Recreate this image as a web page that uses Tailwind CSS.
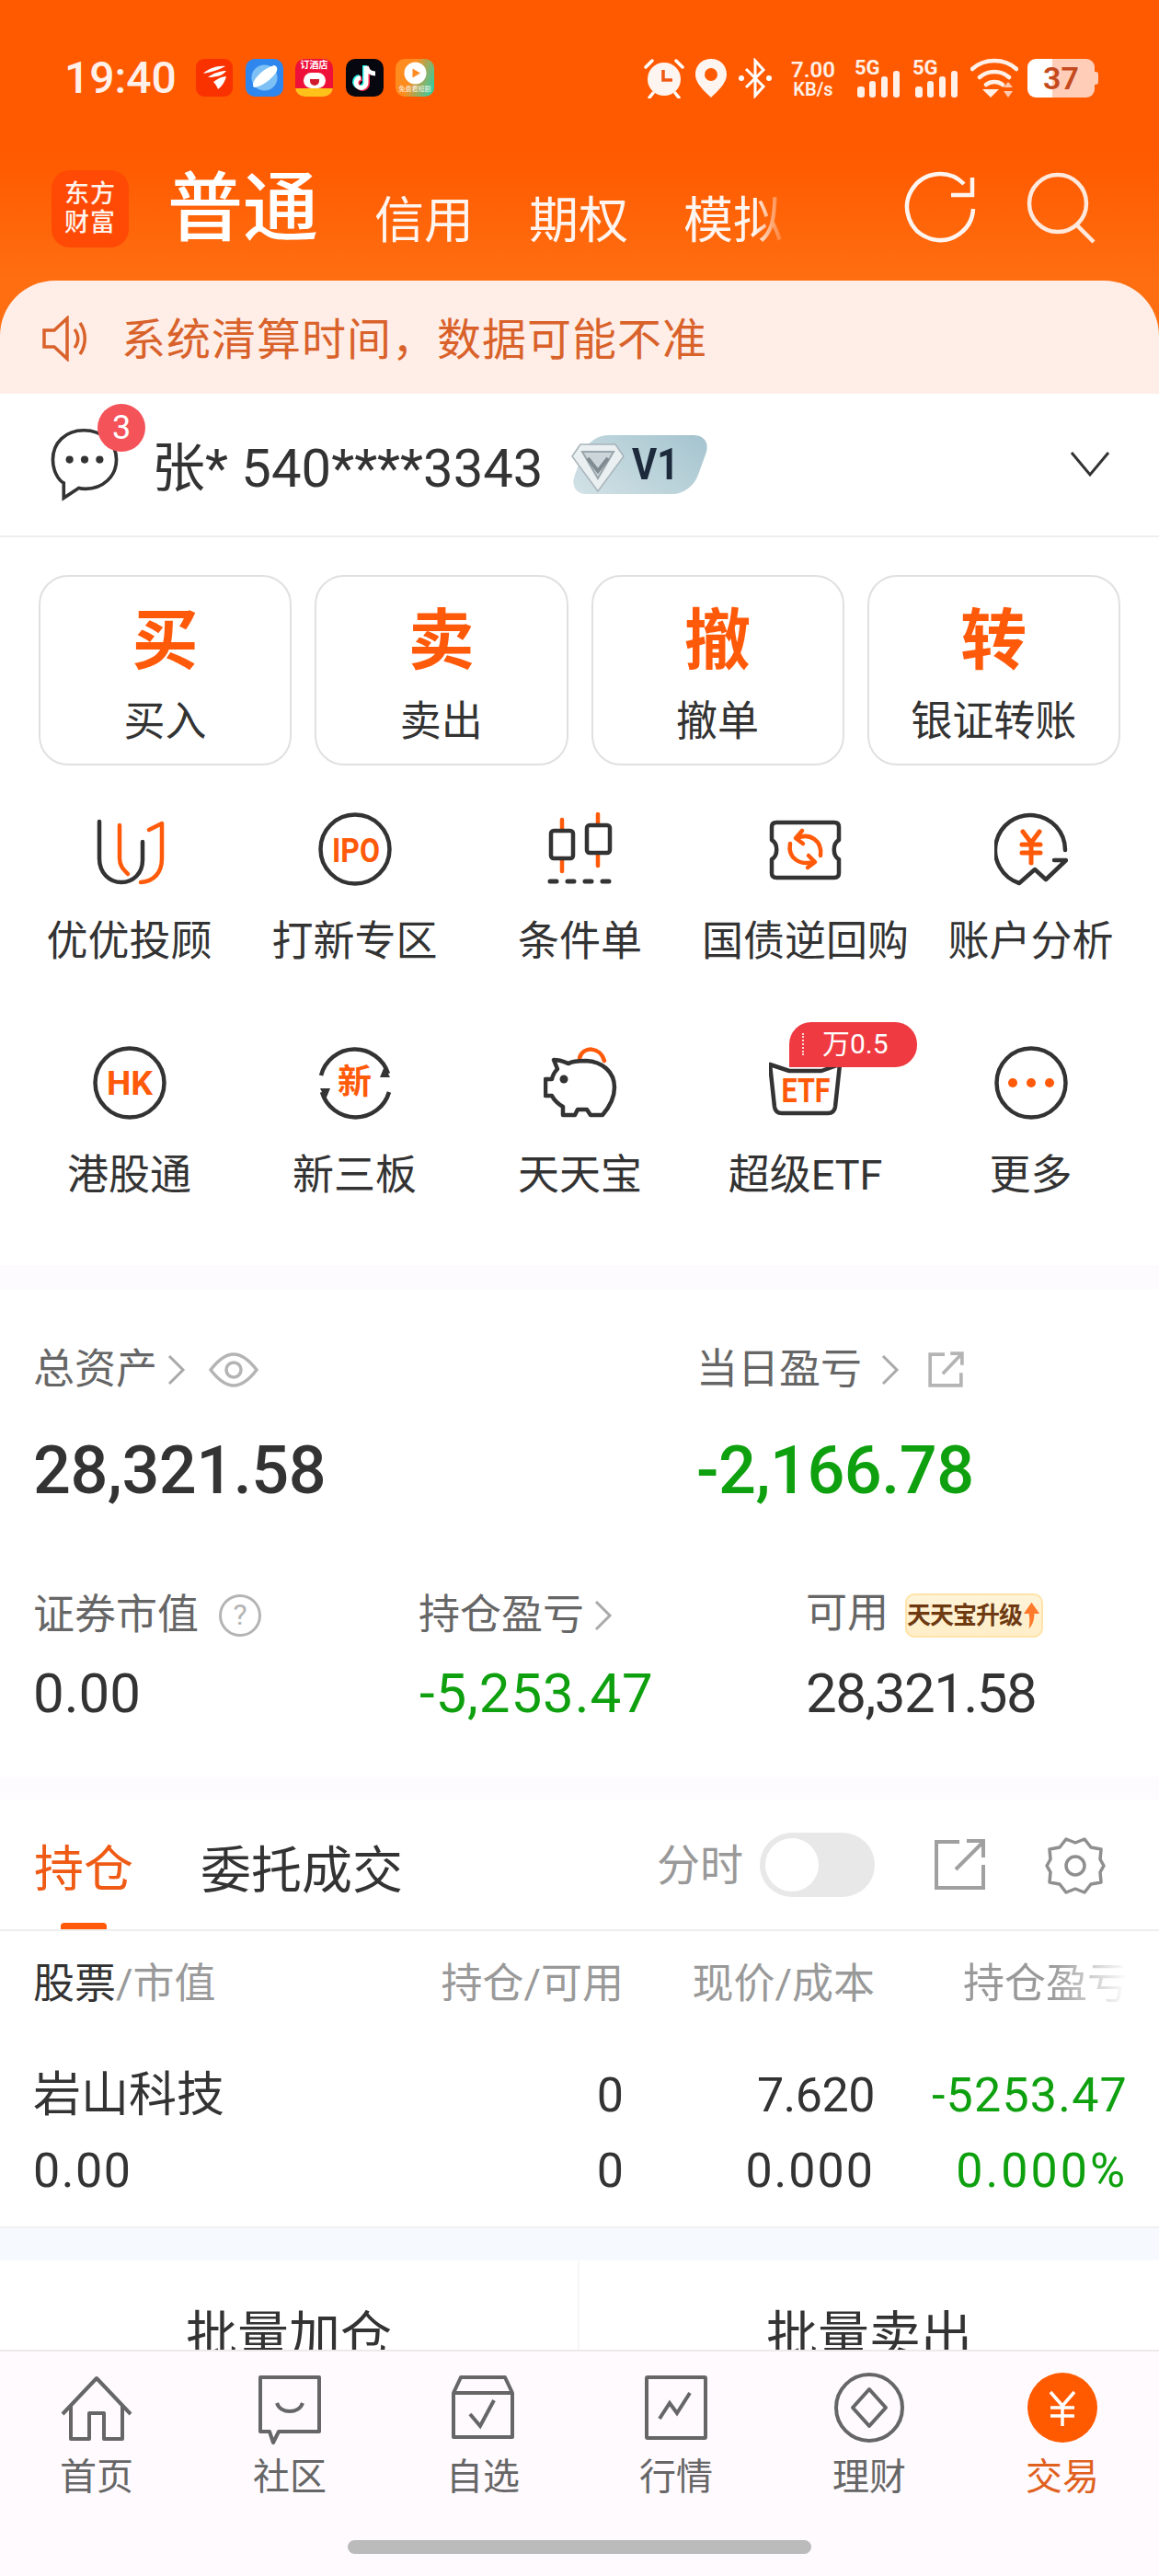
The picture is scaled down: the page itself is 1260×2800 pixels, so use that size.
<!DOCTYPE html>
<html lang="zh"><head><meta charset="utf-8"><script src="https://cdn.jsdelivr.net/npm/@tailwindcss/browser@4"></script></head>
<body class="bg-white">
<div class="w-[1260px] h-[2800px] flex flex-col overflow-hidden bg-white text-[#333] [font-family:Roboto,'Noto_Sans_CJK_SC',sans-serif]">
<div class="flex-none h-[2554px] overflow-hidden">
  <!-- header -->
  <div class="h-[428px] flex flex-col bg-[linear-gradient(180deg,#ff5a00_0px,#ff5a00_170px,#ff6f12_310px)]">
    <div class="h-[64px]"></div>
    <div class="h-[42px] flex items-center text-white pl-[70px]">
      <span class="w-[143px] text-[48px] leading-[42px] font-medium text-[#fff0ea]">19:40</span>
      <svg class="w-[40px] h-[41px]" viewBox="0 0 40 41"><rect width="40" height="41" rx="9" fill="#fa3200"/><path d="M8 16C14 10 24 7 32 8C27 11 22 13 8 16ZM13 20C20 15 27 13 33 13C29 18 23 20 13 20ZM19 25C24 21 29 19 33 19C31 26 28 30 24 33C23 30 21 27 19 25Z" fill="#fff"/></svg>
      <svg class="w-[41px] h-[41px] ml-[14px]" viewBox="0 0 41 41"><rect width="41" height="41" rx="10" fill="#2f86ec"/><circle cx="20.500" cy="20.500" r="14" fill="#7cc0f5"/><path d="M8 27C10 20 20 10 31 7C35 8 35 12 33 15C28 22 18 30 10 31C8 31 8 29 8 27Z" fill="#fff"/></svg>
      <div class="w-[41px] h-[41px] ml-[13px] rounded-[10px] bg-[#ee1038] relative overflow-hidden flex flex-col items-center">
        <span class="text-[10px] leading-[14px] text-white font-bold whitespace-nowrap">订酒店</span>
        <div class="w-[24px] h-[17px] rounded-full bg-white mt-[1px] flex justify-center"><div class="w-[10px] h-[7px] mt-[7px] rounded-b-full bg-[#d11b2c]"></div></div>
        <div class="w-full h-[9px] bg-[#ffc21a] mt-[0px]"></div>
      </div>
      <svg class="w-[41px] h-[41px] ml-[14px]" viewBox="0 0 41 41"><rect width="41" height="41" rx="10" fill="#07070f"/><path d="M22 8V26A5.500 5.500 0 1 1 16 20.500" fill="none" stroke="#25f4ee" stroke-width="5" transform="translate(-1.500 -1)"/><path d="M22 8V26A5.500 5.500 0 1 1 16 20.500" fill="none" stroke="#fe2c55" stroke-width="5" transform="translate(1.500 1)"/><path d="M22 8V26A5.500 5.500 0 1 1 16 20.500" fill="none" stroke="#fff" stroke-width="5"/><path d="M22 8C23 13 27 16 32 16" fill="none" stroke="#fff" stroke-width="5"/></svg>
      <div class="w-[42px] h-[41px] ml-[13px] rounded-[10px] bg-[linear-gradient(110deg,#ff8c1e_40%,#18d6b4)] flex flex-col items-center relative overflow-hidden">
        <svg class="w-[25px] h-[25px] mt-[3px]" viewBox="0 0 25 25"><circle cx="12.500" cy="12.500" r="12" fill="#fff"/><path d="M9.500 7.500L18 12.500L9.500 17.500Z" fill="#ff8a20"/></svg>
        <span class="text-[7px] leading-[9px] text-white/90 whitespace-nowrap mt-[1px]">免费看短剧</span>
      </div>
      <div class="flex-1"></div>
      <svg class="w-[44px] h-[44px]" viewBox="0 0 44 44"><path d="M2 10L9 3M42 10L35 3M10 38L6 43M34 38L38 43" stroke="#fff" stroke-width="3.500" stroke-linecap="round"/><circle cx="22" cy="23" r="18" fill="#fff5f0"/><path d="M21 13V24H31" fill="none" stroke="#ef5a14" stroke-width="3.500"/></svg>
      <svg class="w-[36px] h-[44px] ml-[11px]" viewBox="0 0 36 44"><path fill-rule="evenodd" d="M18 1C8 1 1 8 1 18C1 28 12 37 18 43C24 37 35 28 35 18C35 8 28 1 18 1ZM18 11A7 7 0 1 1 18 25A7 7 0 1 1 18 11Z" fill="#fff5f0"/></svg>
      <svg class="w-[36px] h-[44px] ml-[12px]" viewBox="0 0 36 44"><path d="M8 12L27 31L18 41V3L27 13L8 32" fill="none" stroke="#fff" stroke-width="3"/><circle cx="3" cy="22" r="3" fill="#fff"/><circle cx="33" cy="22" r="3" fill="#fff"/></svg>
      <div class="w-[52px] ml-[19px] flex flex-col items-center font-semibold text-[#fff0e8] leading-none">
        <span class="text-[24px] leading-[24px]">7.00</span><span class="text-[20px] leading-[18px]">KB/s</span>
      </div>
      <svg class="w-[50px] h-[44px] ml-[19px] overflow-visible" viewBox="0 0 50 44"><text x="0" y="18" font-size="22" font-weight="700" fill="#fff0e8" font-family="Roboto">5G</text><rect x="3" y="31" width="8" height="12" rx="3" fill="#fff0e8"/><rect x="16" y="25" width="7" height="18" rx="3" fill="#fff0e8"/><rect x="29" y="20" width="7" height="23" rx="3" fill="#fff0e8"/><rect x="42" y="14" width="7" height="29" rx="3" fill="#fff0e8"/></svg>
      <svg class="w-[50px] h-[44px] ml-[13px] overflow-visible" viewBox="0 0 50 44"><text x="0" y="18" font-size="22" font-weight="700" fill="#fff0e8" font-family="Roboto">5G</text><rect x="3" y="31" width="8" height="12" rx="3" fill="#fff0e8"/><rect x="16" y="25" width="7" height="18" rx="3" fill="#fff0e8"/><rect x="29" y="20" width="7" height="23" rx="3" fill="#fff0e8"/><rect x="42" y="14" width="7" height="29" rx="3" fill="#fff0e8"/></svg>
      <svg class="w-[52px] h-[44px] ml-[13px]" viewBox="0 0 52 44"><path d="M2 12C15 0 37 0 50 12M10 21C19 13 33 13 42 21M17 29C22 25 30 25 35 29" fill="none" stroke="#fff0e8" stroke-width="4.500" stroke-linecap="round"/><path d="M16 34H34L25 43Z" fill="#fff0e8" transform="translate(-3 0)"/><path d="M41 26L46 32H36ZM41 43L46 36H36Z" fill="#ffcab0"/></svg>
      <div class="w-[73px] h-[42px] ml-[10px] rounded-[9px] bg-[linear-gradient(90deg,#fff_0,#fff_37%,#ffcdb8_37%,#ffcdb8_100%)] flex items-center justify-center text-[34px] leading-none font-semibold text-[#c4491c]">37</div>
      <div class="w-[4px] h-[14px] bg-[#ffcdb8] rounded-r-[3px] mr-[66px]"></div>
    </div>
    <div class="h-[79px]"></div>
    <div class="h-[84px] flex items-center text-white pl-[56px] relative">
      <div class="w-[84px] h-[84px] rounded-[20px] bg-[#ff4a05] flex flex-col items-center justify-center text-[27px] leading-[31px] font-medium tracking-[1px] text-[#fff3ec]"><span>东方</span><span>财富</span></div>
      <span class="ml-[42px] text-[82px] leading-[84px] font-medium">普通</span>
      <span class="ml-[61px] mt-[28px] text-[54px] leading-[60px] text-[#fff5f0]">信用</span>
      <span class="ml-[60px] mt-[28px] text-[54px] leading-[60px] text-[#fff5f0]">期权</span>
      <span class="ml-[60px] mt-[28px] text-[54px] leading-[60px] text-[#fff5f0] [mask-image:linear-gradient(to_right,black_72%,transparent_105%)]">模拟</span>
      <svg class="w-[80px] h-[80px] ml-[132px] -mt-[3px]" viewBox="0 0 80 80"><path d="M75 42A36 36 0 1 1 65 15" fill="none" stroke="#fff5f0" stroke-width="4.500"/><path d="M74 8V27H51" fill="none" stroke="#fff5f0" stroke-width="4.500"/></svg>
      <svg class="w-[80px] h-[80px] ml-[50px] -mt-[3px]" viewBox="0 0 80 80"><circle cx="37" cy="36" r="31" fill="none" stroke="#ffe8dc" stroke-width="4.500"/><path d="M58 60L76 78" stroke="#ffe8dc" stroke-width="4.500"/></svg>
    </div>
    <div class="h-[37px]"></div>
    <div class="h-[123px] flex items-center rounded-t-[60px] bg-[#ffeee8] pl-[46px] text-[#d9622b]">
      <svg class="w-[48px] h-[50px] mt-[2px]" viewBox="0 0 48 50"><path d="M2 16H13L27 3V47L13 34H2Z" fill="none" stroke="#d9622b" stroke-width="3.500"/><path d="M35 15C40 21 40 29 35 35M41 8C48 18 48 32 41 42" fill="none" stroke="#d9622b" stroke-width="3.500"/></svg>
      <span class="ml-[38px] mt-[6px] text-[48px] leading-[60px] tracking-[1px]">系统清算时间，数据可能不准</span>
    </div>
  </div>
  <!-- account -->
  <div class="h-[156px] border-b-2 border-[#eeeeee] flex items-center pl-[53px] pr-[53px]">
    <div class="w-[112px] h-[120px] relative">
      <svg class="absolute left-0 top-[20px] w-[78px] h-[80px]" viewBox="0 0 80 88"><path d="M39 3C17 3 2 18 2 38C2 52 9 63 15 66V84L33 72C36 73 38 73 41 73C62 73 78 58 78 38C78 18 61 3 39 3Z" fill="none" stroke="#333" stroke-width="4"/><circle cx="22" cy="38" r="4.500" fill="#333"/><circle cx="40" cy="38" r="4.500" fill="#333"/><circle cx="58" cy="38" r="4.500" fill="#333"/></svg>
      <div class="absolute left-[53px] -top-[6px] w-[52px] h-[52px] rounded-full bg-[#f4535a] text-white text-[36px] leading-[52px] text-center">3</div>
    </div>
    <span class="text-[58px] leading-[70px] mt-[7px]">张* 540****3343</span>
    <div class="ml-[39px] w-[134px] h-[64px] relative">
      <div class="absolute inset-0 skew-x-[-20deg] rounded-[20px] bg-[linear-gradient(30deg,#d4e3e7,#a3c3ce)]"></div>
      <svg class="absolute -left-[8px] top-[9px] w-[58px] h-[53px]" viewBox="0 0 58 53"><path d="M10 1H48L57 14L29 52L1 14Z" fill="#eaeff1" stroke="#a8b4ba" stroke-width="1.500" stroke-linejoin="round"/><path d="M12 9H46L29 38Z" fill="#ccd5d9" stroke="#9aa6ac" stroke-width="2"/><path d="M18 16L29 30L40 16" fill="none" stroke="#7f8b91" stroke-width="4"/></svg>
      <span class="absolute left-[58px] top-[5px] text-[49px] leading-[54px] font-bold text-[#1d2a3c] origin-left scale-x-[0.85]">V1</span>
    </div>
    <div class="flex-1"></div>
    <svg class="w-[44px] h-[30px] -mt-[2px]" viewBox="0 0 44 30"><path d="M2 3L22 27L42 3" fill="none" stroke="#333" stroke-width="3"/></svg>
  </div>
  <!-- actions -->
  <div class="grid grid-cols-4 gap-[25px] px-[42px] pt-[41px]">
    <div class="h-[207px] rounded-[32px] border-2 border-[#e0e0e0] flex flex-col items-center"><span class="mt-[28px] text-[72px] leading-[84px] font-bold text-[#ff5a0a]">买</span><span class="mt-[16px] text-[45px] leading-[60px]">买入</span></div>
    <div class="h-[207px] rounded-[32px] border-2 border-[#e0e0e0] flex flex-col items-center"><span class="mt-[28px] text-[72px] leading-[84px] font-bold text-[#ff5a0a]">卖</span><span class="mt-[16px] text-[45px] leading-[60px]">卖出</span></div>
    <div class="h-[207px] rounded-[32px] border-2 border-[#e0e0e0] flex flex-col items-center"><span class="mt-[28px] text-[72px] leading-[84px] font-bold text-[#ff5a0a]">撤</span><span class="mt-[16px] text-[45px] leading-[60px]">撤单</span></div>
    <div class="h-[207px] rounded-[32px] border-2 border-[#e0e0e0] flex flex-col items-center"><span class="mt-[28px] text-[72px] leading-[84px] font-bold text-[#ff5a0a]">转</span><span class="mt-[16px] text-[45px] leading-[60px]">银证转账</span></div>
  </div>
  <!-- grid -->
  <div class="grid grid-cols-5 pl-[18px] pr-[17px] pt-[51px] h-[543px] text-[45px] leading-[60px]">
    <div class="h-[254px] flex flex-col items-center">
      <svg class="w-[80px] h-[80px]" viewBox="0 0 80 80" fill="none" stroke-width="4.500" stroke-linecap="round" stroke-linejoin="round"><path d="M7 10V50C7 66 18 76 31 76C44 76 54 66 54 52V32" stroke="#333"/><path d="M29 14V50C29 58 33 62 38 67" stroke="#ff5a0a"/><path d="M61 19L75 12V50C75 66 66 75 52 76" stroke="#ff5a0a"/></svg>
      <span class="mt-[31px] whitespace-nowrap">优优投顾</span>
    </div>
    <div class="h-[254px] flex flex-col items-center">
      <svg class="w-[80px] h-[80px]" viewBox="0 0 80 80"><circle cx="40" cy="40" r="37.500" fill="none" stroke="#333" stroke-width="4.500"/><text x="41" y="54" text-anchor="middle" font-size="37" font-weight="700" fill="#ff5a0a" font-family="Roboto" textLength="52" lengthAdjust="spacingAndGlyphs">IPO</text></svg>
      <span class="mt-[31px] whitespace-nowrap">打新专区</span>
    </div>
    <div class="h-[254px] flex flex-col items-center">
      <svg class="w-[80px] h-[80px]" viewBox="0 0 80 80" fill="none" stroke-width="4.500" stroke-linecap="round"><path d="M20 8V20M20 50V64M59 2V14M59 44V58" stroke="#ff5a0a"/><rect x="8" y="20" width="24" height="30" rx="3" stroke="#333"/><rect x="47" y="14" width="25" height="30" rx="3" stroke="#333"/><path d="M7 75H14M26 75H33M45 75H52M64 75H71" stroke="#333" stroke-width="5"/></svg>
      <span class="mt-[31px] whitespace-nowrap">条件单</span>
    </div>
    <div class="h-[254px] flex flex-col items-center">
      <svg class="w-[80px] h-[80px]" viewBox="0 0 80 80" fill="none" stroke-width="4.500" stroke-linecap="round" stroke-linejoin="round"><path d="M8 11H71Q76 11 76 16V30C69 34 69 47 76 51V66Q76 71 71 71H8Q3 71 3 66V51C10 47 10 34 3 30V16Q3 11 8 11Z" stroke="#333"/><path d="M30 28C44 22 58 30 56 47M23 34C20 50 34 58 49 54" stroke="#ff5a0a"/><path d="M36 20L29 28L37 34M43 47L50 54L42 60" stroke="#ff5a0a"/></svg>
      <span class="mt-[31px] whitespace-nowrap">国债逆回购</span>
    </div>
    <div class="h-[254px] flex flex-col items-center">
      <svg class="w-[80px] h-[80px]" viewBox="0 0 80 80" fill="none" stroke-width="4.500" stroke-linecap="round" stroke-linejoin="round"><path d="M77 41A38 38 0 1 0 27 77L44 62L56 73L78 52H65" stroke="#333"/><path d="M31 21L40 33L49 21M40 33V55M30 35H50M30 44H50" stroke="#ff5a0a" stroke-width="5"/></svg>
      <span class="mt-[31px] whitespace-nowrap">账户分析</span>
    </div>
    <div class="h-[254px] flex flex-col items-center">
      <svg class="w-[80px] h-[80px]" viewBox="0 0 80 80"><circle cx="40" cy="40" r="37.500" fill="none" stroke="#333" stroke-width="4.500"/><text x="40" y="53" text-anchor="middle" font-size="36" font-weight="700" fill="#ff5a0a" font-family="Roboto" textLength="50" lengthAdjust="spacingAndGlyphs">HK</text></svg>
      <span class="mt-[31px] whitespace-nowrap">港股通</span>
    </div>
    <div class="h-[254px] flex flex-col items-center">
      <div class="w-[80px] h-[80px] relative flex items-center justify-center">
        <svg class="absolute inset-0 w-[80px] h-[80px]" viewBox="0 0 80 80" fill="none"><path d="M3 32A38 38 0 0 1 76 30" stroke="#333" stroke-width="4.500"/><path d="M77 50A38 38 0 0 1 4 50" stroke="#333" stroke-width="4.500"/><path d="M72 22L78 34L67 34Z" fill="#333"/><path d="M8 58L2 46L13 46Z" fill="#333"/></svg>
        <span class="text-[37px] leading-[40px] font-bold text-[#ff5a0a]">新</span>
      </div>
      <span class="mt-[31px] whitespace-nowrap">新三板</span>
    </div>
    <div class="h-[254px] flex flex-col items-center">
      <svg class="w-[80px] h-[80px]" viewBox="0 0 80 80" fill="none" stroke-width="4.500" stroke-linecap="round" stroke-linejoin="round"><path d="M39 13C43 0 61 0 66 16" stroke="#ff5a0a"/><path d="M11 15C18 15 22 17 27 19C32 16 40 16 46 16C64 17 77 28 77 45C77 58 70 68 64 75H51L47 69H37L34 75H21V66C16 63 12 60 9 54H2V36H9C10 31 12 28 15 25Z" stroke="#333"/><circle cx="22" cy="36" r="4.500" fill="#333" stroke="none"/></svg>
      <span class="mt-[31px] whitespace-nowrap">天天宝</span>
    </div>
    <div class="h-[254px] flex flex-col items-center relative">
      <div class="w-[80px] h-[80px] relative">
        <svg class="absolute left-0 top-0 w-[80px] h-[80px]" viewBox="0 0 80 80"><path d="M1 20L22 27H57L77 20L72 66Q71 73 64 73H14Q7 73 6 66Z" fill="none" stroke="#333" stroke-width="4.500" stroke-linejoin="round"/><text x="40" y="61" text-anchor="middle" font-size="36" font-weight="700" fill="#ff5a0a" font-family="Roboto" textLength="53" lengthAdjust="spacingAndGlyphs">ETF</text></svg>
      </div>
      <div class="absolute left-[105px] -top-[26px] w-[139px] h-[49px] rounded-[24px] rounded-bl-none bg-[#ee3a40] text-white text-[30px] leading-[48px] pl-[36px] whitespace-nowrap">万0.5<div class="absolute left-[14px] top-[12px] h-[24px] border-l-2 border-dotted border-white/80"></div></div>
      <span class="mt-[31px] whitespace-nowrap">超级ETF</span>
    </div>
    <div class="h-[254px] flex flex-col items-center">
      <svg class="w-[80px] h-[80px]" viewBox="0 0 80 80"><circle cx="40" cy="40" r="37.500" fill="none" stroke="#333" stroke-width="4.500"/><circle cx="20" cy="40" r="5" fill="#ff5a0a"/><circle cx="40" cy="40" r="5" fill="#ff5a0a"/><circle cx="60" cy="40" r="5" fill="#ff5a0a"/></svg>
      <span class="mt-[31px] whitespace-nowrap">更多</span>
    </div>
  </div>
  <!-- gap -->
  <div class="h-[27px] bg-[#fefbfe]"></div>
  <!-- assets -->
  <div class="h-[529px] pl-[36px]">
    <div class="flex pt-[57px] h-[117px] text-[45px] leading-[60px] text-[#666]">
      <div class="w-[721px] flex items-center">
        <span>总资产</span>
        <svg class="w-[22px] h-[34px] ml-[10px]" viewBox="0 0 22 34"><path d="M3 2L18 17L3 32" fill="none" stroke="#aaa" stroke-width="3"/></svg>
        <svg class="w-[54px] h-[38px] ml-[24px]" viewBox="0 0 54 38" fill="none" stroke="#b4b4b4" stroke-width="3.500"><path d="M2 19C12 6 20 2 27 2C34 2 42 6 52 19C42 32 34 36 27 36C20 36 12 32 2 19Z"/><circle cx="27" cy="19" r="8"/></svg>
      </div>
      <div class="flex items-center">
        <span>当日盈亏</span>
        <svg class="w-[22px] h-[34px] ml-[20px]" viewBox="0 0 22 34"><path d="M3 2L18 17L3 32" fill="none" stroke="#aaa" stroke-width="3"/></svg>
        <svg class="w-[40px] h-[40px] ml-[29px]" viewBox="0 0 38 38" fill="none" stroke="#b4b4b4" stroke-width="3.500"><path d="M18 3H3V35H35V22M16 23L35 3M24 2H36V14"/></svg>
      </div>
    </div>
    <div class="flex h-[84px] mt-[38px] text-[72px] leading-[84px] font-medium tracking-[-0.5px]">
      <span class="w-[721px]">28,321.58</span><span class="text-[#0ea00e]">-2,166.78</span>
    </div>
    <div class="flex h-[60px] mt-[85px] text-[45px] leading-[60px] text-[#666]">
      <div class="w-[419px] flex items-center">
        <span>证券市值</span>
        <div class="ml-[22px] w-[46px] h-[46px] rounded-full border-[3.5px] border-[#b4b4b4] text-[#b4b4b4] text-[32px] leading-[38px] text-center">?</div>
      </div>
      <div class="w-[421px] flex items-center">
        <span>持仓盈亏</span>
        <svg class="w-[22px] h-[34px] ml-[10px]" viewBox="0 0 22 34"><path d="M3 2L18 17L3 32" fill="none" stroke="#aaa" stroke-width="3"/></svg>
      </div>
      <div class="flex items-center">
        <span class="-mt-[4px]">可用</span>
        <div class="ml-[18px] w-[150px] h-[48px] rounded-[10px] bg-[linear-gradient(180deg,#fff4d8,#ffeec8)] border-2 border-[#ffe3a8] flex items-center justify-center text-[#6e3a12] text-[26px] leading-[44px] font-bold whitespace-nowrap tracking-[-1px]">天天宝升级<svg class="w-[22px] h-[32px]" viewBox="0 0 22 32"><path d="M11 1L20 14H14C14 20 13 26 8 31C9 25 9 20 8 14H2Z" fill="#ff7a2a"/></svg></div>
      </div>
    </div>
    <div class="flex h-[70px] mt-[20px] text-[60px] leading-[70px] tracking-[-1.5px]">
      <span class="w-[419px] tracking-[0px]">0.00</span><span class="w-[421px] text-[#0ea00e] tracking-[0.9px] pl-[1px]">-5,253.47</span><span>28,321.58</span>
    </div>
  </div>
  <!-- gap -->
  <div class="h-[25px] bg-[#fefbfe]"></div>
  <!-- tabs -->
  <div class="h-[143px] border-b-2 border-[#eeeeee] relative flex items-start pl-[37px]">
    <div class="h-[141px] flex flex-col items-center">
      <span class="mt-[42px] text-[54px] leading-[70px] text-[#ef5a14]">持仓</span>
      <div class="flex-1"></div>
      <div class="w-[50px] h-[7px] rounded-t-[4px] bg-[#ff5a0a]"></div>
    </div>
    <span class="ml-[73px] mt-[42px] text-[55px] leading-[70px]">委托成交</span>
    <div class="flex-1"></div>
    <span class="mt-[42px] text-[47px] leading-[60px] text-[#999]">分时</span>
    <div class="ml-[18px] mt-[36px] w-[125px] h-[70px] rounded-full bg-[#e8e8e8] p-[6px]"><div class="w-[58px] h-[58px] rounded-full bg-white"></div></div>
    <svg class="w-[56px] h-[56px] ml-[64px] mt-[43px]" viewBox="0 0 56 56" fill="none" stroke="#a0a0a0" stroke-width="4"><path d="M28 3H3V53H54V28M24 33L54 3M36 2H54V20"/></svg>
    <svg class="w-[66px] h-[66px] ml-[65px] mt-[39px] mr-[58px]" viewBox="0 0 66 66" fill="none" stroke="#8f8f8f" stroke-width="3.500"><path d="M23 4L33 8L43 4L50 13L61 15L60 26L64 33L60 40L61 51L50 53L43 62L33 58L23 62L16 53L5 51L6 40L2 33L6 26L5 15L16 13Z" stroke-linejoin="round"/><circle cx="33" cy="33" r="10"/></svg>
  </div>
  <!-- table -->
  <div class="h-[323px] border-b-2 border-[#f0f0f0] pl-[36px] pr-[34px]">
    <div class="grid grid-cols-[382px_260px_273px_275px] h-[115px] pt-[28px] text-[45px] leading-[60px] text-[#999]">
      <span><span class="text-[#333]">股票</span>/市值</span>
      <span class="text-right whitespace-nowrap">持仓/可用</span>
      <span class="text-right whitespace-nowrap">现价/成本</span>
      <span class="pl-[96px] whitespace-nowrap [mask-image:linear-gradient(to_right,black_70%,transparent_100%)]">持仓盈亏</span>
    </div>
    <div class="grid grid-cols-[382px_260px_273px_275px] h-[111px] pt-[29px] text-[52px] leading-[70px]">
      <span>岩山科技</span><span class="text-right">0</span><span class="text-right tracking-[-0.5px]">7.620</span><span class="text-right text-[#0ea00e] tracking-[1.2px]">-5253.47</span>
    </div>
    <div class="grid grid-cols-[382px_260px_273px_275px] h-[70px] text-[52px] leading-[70px]">
      <span class="tracking-[1.5px]">0.00</span><span class="text-right">0</span><span class="text-right tracking-[2px]">0.000</span><span class="text-right text-[#0ea00e] tracking-[3px]">0.000%</span>
    </div>
  </div>
  <div class="h-[35px] bg-[#f6fafe]"></div>
  <div class="grid grid-cols-2 h-[120px] text-[56px] leading-[70px]">
    <div class="border-r-2 border-[#f6f6f6] text-center pt-[47px]">批量加仓</div>
    <div class="text-center pt-[47px]">批量卖出</div>
  </div>
</div>
<!-- nav -->
<div class="flex-1 border-t-2 border-[#ece8ec] bg-[#fefafe] flex flex-col">
  <div class="grid grid-cols-6 pt-[21px] text-[40px] leading-[50px] text-[#666]">
    <div class="flex flex-col items-center">
      <svg class="w-[80px] h-[80px]" viewBox="0 0 80 80" fill="none" stroke="#666" stroke-width="4"><path d="M3 47L40 8L77 47M12 38V74H32V46H48V74H68V38" stroke-linejoin="round"/></svg>
      <span class="mt-[11px]">首页</span>
    </div>
    <div class="flex flex-col items-center">
      <svg class="w-[80px] h-[80px]" viewBox="0 0 80 80" fill="none" stroke="#666" stroke-width="4"><path d="M8 7H72V66H28L22 78L18 66H8Z" stroke-linejoin="round"/><path d="M26 35C30 47 50 47 54 35"/></svg>
      <span class="mt-[11px]">社区</span>
    </div>
    <div class="flex flex-col items-center">
      <svg class="w-[80px] h-[80px]" viewBox="0 0 80 80" fill="none" stroke="#666" stroke-width="4"><path d="M8 24L16 7H64L72 24M8 24H72V72H8Z" stroke-linejoin="round"/><path d="M26 47L37 60L52 32"/></svg>
      <span class="mt-[11px]">自选</span>
    </div>
    <div class="flex flex-col items-center">
      <svg class="w-[80px] h-[80px]" viewBox="0 0 80 80" fill="none" stroke="#666" stroke-width="4"><rect x="8" y="7" width="64" height="66" rx="1"/><path d="M22 52L33 35L41 46L55 24"/></svg>
      <span class="mt-[11px]">行情</span>
    </div>
    <div class="flex flex-col items-center">
      <svg class="w-[80px] h-[80px]" viewBox="0 0 80 80" fill="none" stroke="#666" stroke-width="4"><circle cx="40" cy="40" r="36"/><path d="M40 20L58 40L40 60L22 40Z" stroke-linejoin="round"/></svg>
      <span class="mt-[11px]">理财</span>
    </div>
    <div class="flex flex-col items-center">
      <svg class="w-[80px] h-[80px]" viewBox="0 0 80 80" fill="none"><circle cx="40" cy="40" r="38" fill="#ff5a00"/><path d="M27 23L40 38L53 23M40 38V60M27 40H53M27 49H53" stroke="#fff" stroke-width="3.500"/></svg>
      <span class="mt-[11px] text-[#e0601e]">交易</span>
    </div>
  </div>
  <div class="mt-[43px] mx-auto w-[504px] h-[15px] rounded-full bg-[#bbbbbb]"></div>
</div>
</div>
</body></html>
